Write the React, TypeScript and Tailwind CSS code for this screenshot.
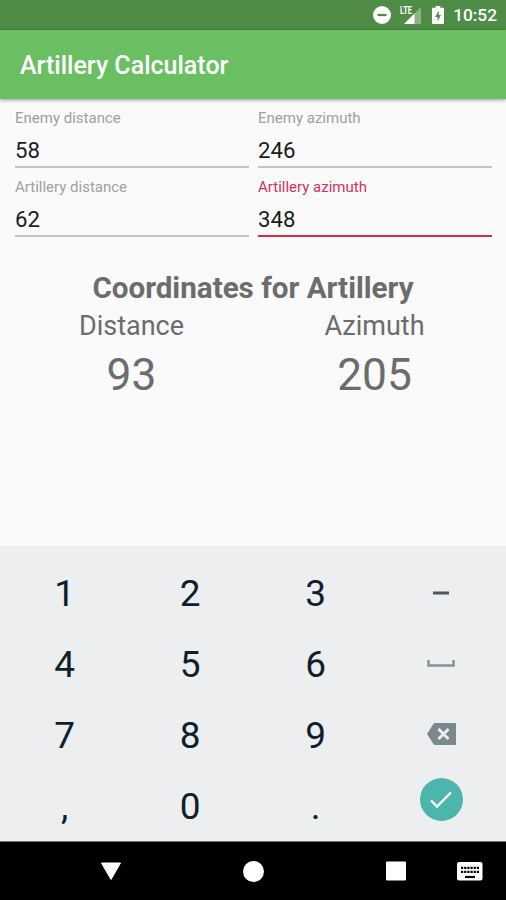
import type { ReactNode } from "react";

function Field({
  label,
  value,
  active,
}: {
  label: string;
  value: string;
  active?: boolean;
}) {
  return (
    <div className="h-[69px]">
      <div
        className={`pt-2.5 text-[15px] leading-[18px] ${active ? "text-[#d4305f]" : "text-[#a0a0a0]"}`}
      >
        {label}
      </div>
      <div
        className={`mt-2 flex h-[33px] items-center border-b-2 text-[22.2px] leading-none text-[#1c1c1c] ${active ? "border-[#d42c49]" : "border-[#c4c4c4]"}`}
      >
        {value}
      </div>
    </div>
  );
}

function Result({ label, value }: { label: string; value: string }) {
  return (
    <div className="text-center">
      <div className="text-[27px] leading-8">{label}</div>
      <div className="mt-[7px] text-[44.3px] leading-[52px]">{value}</div>
    </div>
  );
}

function Key({ children }: { children: ReactNode }) {
  return (
    <button
      type="button"
      className="flex h-[71px] items-center justify-center text-[37px] leading-none text-[#0f1f2c]"
    >
      {children}
    </button>
  );
}

function StatusBar() {
  return (
    <div className="flex h-[30px] items-center justify-end bg-[#4f8d47] pr-[9px] text-white">
      <svg width="18" height="18" viewBox="0 0 18 18" className="mr-2">
        <circle cx="9" cy="9" r="9" fill="#fff" />
        <path d="M4.500 9h9" stroke="#4f8d47" strokeWidth="2.200" />
      </svg>
      <svg width="23" height="20" viewBox="0 0 23 20" className="mr-2.5">
        <path d="M22 2v17H5z" fill="#fff" opacity="0.35" />
        <path d="M15.500 8.500V19H5z" fill="#fff" />
        <text
          x="1"
          y="8.500"
          fill="#fff"
          fontSize="10"
          fontWeight="700"
          textLength="12"
          lengthAdjust="spacingAndGlyphs"
        >
          LTE
        </text>
      </svg>
      <svg width="12" height="18" viewBox="0 0 12 18" className="mr-[9px]">
        <path
          d="M3.700 0h4.600v1.800H11a1 1 0 0 1 1 1V17a1 1 0 0 1-1 1H1a1 1 0 0 1-1-1V2.800a1 1 0 0 1 1-1h2.700z"
          fill="#fff"
        />
        <path d="M6.700 4.500 3 11h2.500v4.500L9 9H6.700z" fill="#4f8d47" />
      </svg>
      <span className="mt-0.5 text-[17.300px] leading-none font-medium">10:52</span>
    </div>
  );
}

function NavBar() {
  return (
    <div className="grid h-[59px] grid-cols-[40px_142px_143px_142px_39px] items-center justify-items-center border-t border-[#777] bg-black">
      <span />
      <svg width="22" height="19" viewBox="0 0 22 19">
        <path d="M1.500 1h19L11 17.500z" fill="#fff" stroke="#fff" strokeLinejoin="round" />
      </svg>
      <svg width="21" height="21" viewBox="0 0 21 21">
        <circle cx="10.500" cy="10.500" r="10.500" fill="#fff" />
      </svg>
      <svg width="20" height="20" viewBox="0 0 20 20">
        <rect width="20" height="19" y=".5" rx="1" fill="#fff" />
      </svg>
      <svg width="26" height="19" viewBox="0 0 26 19" className="-ml-[34px]">
        <rect width="25.500" height="18.500" rx="2" fill="#fff" />
        <path
          d="M4 5.800h18M4 9.800h18"
          stroke="#000"
          strokeWidth="2.200"
          strokeDasharray="2.200 .96"
        />
        <path d="M8 15h10" stroke="#000" strokeWidth="2.200" />
      </svg>
    </div>
  );
}

export default function App() {
  return (
    <div className="flex h-[900px] w-[506px] flex-col overflow-hidden bg-[#fafafa] font-['Roboto',sans-serif]">
      <StatusBar />
      <header className="z-10 flex h-[69px] items-center bg-[#69bf62] px-5 shadow-[0_1px_4px_rgba(0,0,0,0.4)]">
        <h1 className="pt-[3px] text-[25px] font-medium text-white">Artillery Calculator</h1>
      </header>

      <main className="flex-1">
        <div className="grid grid-cols-2 gap-x-[9px] pr-3.5 pl-[15px]">
          <Field label="Enemy distance" value="58" />
          <Field label="Enemy azimuth" value="246" />
          <Field label="Artillery distance" value="62" />
          <Field label="Artillery azimuth" value="348" active />
        </div>

        <section className="mt-8 text-[#6c6c6c]">
          <h2 className="pt-px text-center text-[29.600px] leading-9 font-bold">
            Coordinates for Artillery
          </h2>
          <div className="mt-1 grid grid-cols-2 px-[10px]">
            <Result label="Distance" value="93" />
            <Result label="Azimuth" value="205" />
          </div>
        </section>
      </main>

      {/* numeric keyboard */}
      <div className="grid h-[295px] grid-cols-4 bg-[#eceef0] px-0.5 pt-3">
        <Key>1</Key>
        <Key>2</Key>
        <Key>3</Key>
        <Key>
          <svg width="16" height="4" viewBox="0 0 16 4" className="mb-px">
            <path d="M0 2h16" stroke="#4c565c" strokeWidth="3" />
          </svg>
        </Key>
        <Key>4</Key>
        <Key>5</Key>
        <Key>6</Key>
        <Key>
          <svg width="28" height="7" viewBox="0 0 28 7" className="mb-[3px]">
            <path d="M1.500 0v5.500h25V0" fill="none" stroke="#899297" strokeWidth="2.500" />
          </svg>
        </Key>
        <Key>7</Key>
        <Key>8</Key>
        <Key>9</Key>
        <Key>
          <svg width="29" height="22" viewBox="0 0 29 22" className="mb-1">
            <path
              d="M8 0h20a1 1 0 0 1 1 1v20a1 1 0 0 1-1 1H8q-1 0-1.600-1L0 11l6.400-10Q7 0 8 0z"
              fill="#7b888e"
            />
            <path d="m11.500 6 10 10m0-10-10 10" stroke="#eceef0" strokeWidth="3" />
          </svg>
        </Key>
        <Key>,</Key>
        <Key>0</Key>
        <Key>.</Key>
        <Key>
          <span className="mb-3.5 flex size-[43px] items-center justify-center rounded-full bg-[#4db6ac]">
            <svg width="22" height="17" viewBox="0 0 22 17">
              <path d="m1 9.500 6 6L21 1.500" fill="none" stroke="#fff" strokeWidth="2.400" />
            </svg>
          </span>
        </Key>
      </div>

      <NavBar />
    </div>
  );
}
